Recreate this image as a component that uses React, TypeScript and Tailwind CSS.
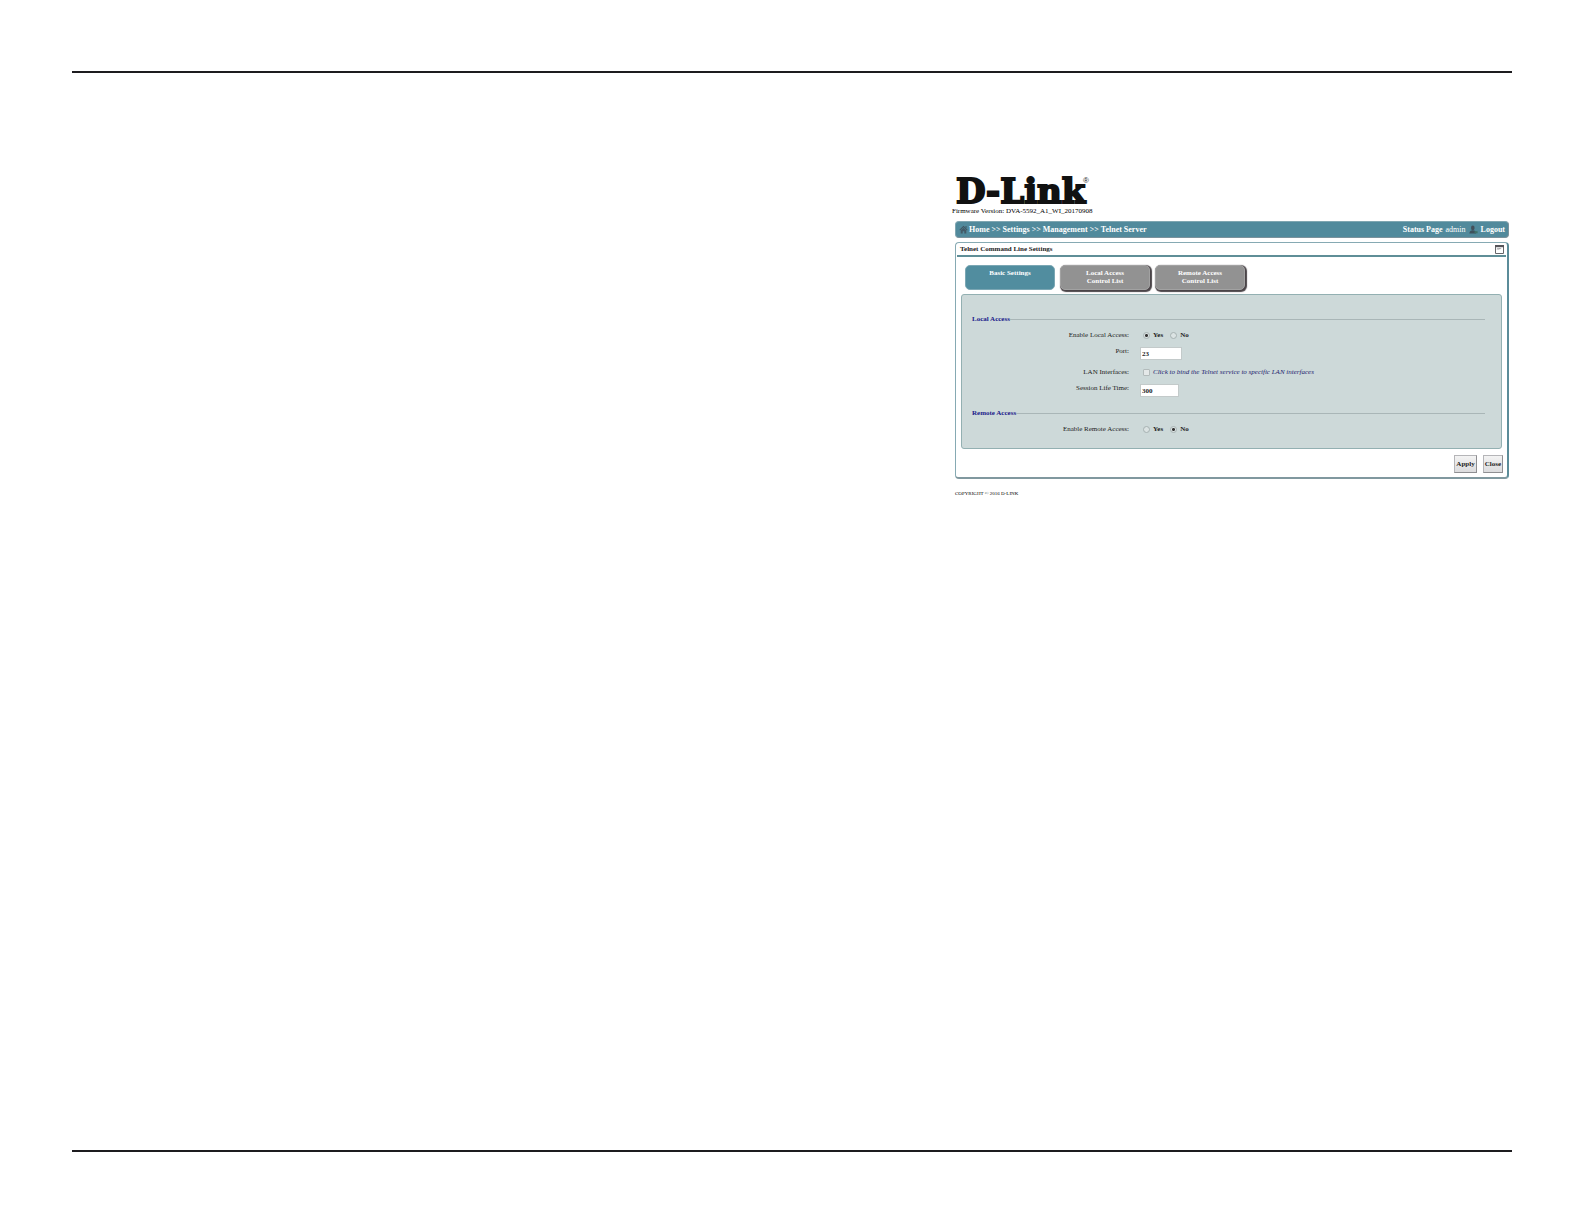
import { useState } from "react";
import type { ReactNode } from "react";
import clsx from "clsx";

const tabs = [
  { id: "basic", lines: ["Basic Settings"] },
  { id: "local", lines: ["Local Access", "Control List"] },
  { id: "remote", lines: ["Remote Access", "Control List"] },
];

export default function App() {
  return (
    <div className="min-h-screen bg-white px-[72px] pt-[71px] pb-[72px] flex flex-col font-['Liberation_Serif',serif] text-black">
      <div className="flex-1 border-y-2 border-[#1d1c1f] pt-[102px]">
        <div className="w-full max-w-[554px] ml-auto mr-[3px]">
          <Header />
          <NavBar />
          <TelnetSettings />
          <footer className="mt-3 text-[5px] leading-[6px]">COPYRIGHT © 2016 D-LINK</footer>
        </div>
      </div>
    </div>
  );
}

function Header() {
  return (
    <header className="mb-[6px]">
      <svg viewBox="0 0 140 32" className="block w-[140px] h-[32px] overflow-visible" role="img" aria-label="D-Link">
        <text
          x="1"
          y="28"
          fontFamily="DejaVu Serif, serif"
          fontWeight="700"
          fontSize="34"
          fill="#111"
          stroke="#111"
          strokeWidth="2"
        >
          D-Link
        </text>
        <text x="128" y="8" fontFamily="Liberation Sans, sans-serif" fontSize="8" fill="#222">
          ®
        </text>
      </svg>
      <p className="-ml-[3px] text-[7px] leading-[8px]">Firmware Version: DVA-5592_A1_WI_20170908</p>
    </header>
  );
}

function NavBar() {
  return (
    <nav className="flex items-center justify-between h-[17px] px-[3px] rounded-sm bg-[#518a9c] border border-[#7fa6b1] border-b-[#7b929c] border-r-[#7b929c] text-[8px] leading-[10px] font-bold text-white">
      <div className="flex items-center gap-px">
        <HomeIcon />
        <span className="flex gap-[2px]">
          <a href="#home">Home</a>
          <span>&gt;&gt;</span>
          <a href="#settings">Settings</a>
          <span>&gt;&gt;</span>
          <a href="#management">Management</a>
          <span>&gt;&gt;</span>
          <a href="#telnet">Telnet Server</a>
        </span>
      </div>
      <div className="flex items-center gap-[3px]">
        <a href="#status">Status Page</a>
        <span className="font-normal">admin</span>
        <UserIcon />
        <a href="#logout">Logout</a>
      </div>
    </nav>
  );
}

function TelnetSettings() {
  const [tab, setTab] = useState("basic");

  return (
    <main className="mt-1 px-px pb-1 rounded-sm border border-[#86aab3] border-r-2 border-b-2 border-r-[#5b8c99] border-b-[#80989f]">
      <div className="flex items-center justify-between h-[14px] pl-[3px] pr-[2px] border-b-2 border-[#5f8e97]">
        <h1 className="text-[7px] leading-[8px] font-bold text-[#222]">Telnet Command Line Settings</h1>
        <WindowIcon />
      </div>

      {/* Tabs */}
      <div className="flex gap-[5px] mt-2 ml-2">
        {tabs.map(({ id, lines }) => (
          <button
            key={id}
            type="button"
            onClick={() => setTab(id)}
            className={clsx(
              "flex flex-col items-center w-[90px] h-[25px] pt-[3px] rounded-[5px] text-[7px] leading-[8px] font-bold text-white",
              tab === id
                ? "bg-[#518d9f] border border-[#7ba7b4]"
                : "bg-[#929292] border border-[#a2a2a2] shadow-[1px_1px_1px_1px_#4a4448]"
            )}
          >
            {lines.map((line) => (
              <span key={line}>{line}</span>
            ))}
          </button>
        ))}
      </div>

      <form onSubmit={(e) => e.preventDefault()}>
        <div className="mt-1 mx-1 pt-5 pb-[15px] px-[10px] rounded-[3px] bg-[#cdd9d9] border border-[#93b0b2]">
          <SectionTitle>Local Access</SectionTitle>
          <div className="mt-2 flex flex-col gap-2">
            <YesNoRow label="Enable Local Access:" name="local" initial="Yes" />
            <Row label="Port:" htmlFor="port">
              <TextBox id="port" value="23" className="w-[42px]" />
            </Row>
            <Row label="LAN Interfaces:" htmlFor="lan">
              <input
                id="lan"
                type="checkbox"
                className="appearance-none ml-[3px] size-[7px] rounded-[1px] border border-[#b3bbbb] bg-[#e4e8e8] checked:bg-[#518a9c]"
              />
              <label htmlFor="lan" className="ml-[3px] italic text-[#23236e]">
                Click to bind the Telnet service to specific LAN interfaces
              </label>
            </Row>
            <Row label="Session Life Time:" htmlFor="life">
              <TextBox id="life" value="300" className="w-[39px]" />
            </Row>
          </div>
          <div className="mt-3">
            <SectionTitle>Remote Access</SectionTitle>
          </div>
          <div className="mt-2">
            <YesNoRow label="Enable Remote Access:" name="remote" initial="No" />
          </div>
        </div>

        <div className="flex justify-end gap-[6px] mt-[6px] mr-[3px]">
          <ActionButton>Apply</ActionButton>
          <ActionButton>Close</ActionButton>
        </div>
      </form>
    </main>
  );
}

function SectionTitle({ children }: { children: ReactNode }) {
  return (
    <div className="flex items-center mr-[6px] text-[7px] leading-[8px]">
      <h2 className="font-bold text-[#20208a]">{children}</h2>
      <span className="flex-1 h-px bg-[#a9b6b7]" />
    </div>
  );
}

function Row({ label, htmlFor, children }: { label: string; htmlFor?: string; children: ReactNode }) {
  return (
    <div className="flex items-center min-h-2 text-[7px] leading-[8px] text-[#222]">
      {htmlFor ? (
        <label htmlFor={htmlFor} className="self-start w-[157px] mr-[11px] text-right">{label}</label>
      ) : (
        <span className="self-start w-[157px] mr-[11px] text-right">{label}</span>
      )}
      {children}
    </div>
  );
}

function YesNoRow({ label, name, initial }: { label: string; name: string; initial: string }) {
  return (
    <Row label={label}>
      <div className="flex gap-[7px] ml-[3px]" role="radiogroup" aria-label={label}>
        {["Yes", "No"].map((option) => (
          <label key={option} className="flex items-center gap-[3px] font-bold">
            <input
              type="radio"
              name={name}
              defaultChecked={option === initial}
              className="appearance-none size-[7px] rounded-full border border-[#a6b1b1] bg-[#dbe3e3] checked:bg-[radial-gradient(circle,#333_0_1px,#dbe3e3_2px)]"
            />
            {option}
          </label>
        ))}
      </div>
    </Row>
  );
}

function TextBox({ id, value, className }: { id: string; value: string; className: string }) {
  return (
    <input
      id={id}
      type="text"
      defaultValue={value}
      className={clsx("h-[13px] px-px bg-white border border-[#c3caca] text-[7px] leading-[8px] font-bold", className)}
    />
  );
}

function ActionButton({ children }: { children: ReactNode }) {
  return (
    <button
      type="button"
      className="h-[18px] px-px border border-[#b5b5b8] border-r-[#8f8f92] border-b-[#8f8f92] bg-linear-to-b from-[#f3f3f3] to-[#dcdcde] text-[7px] leading-[8px] font-bold text-[#222]"
    >
      {children}
    </button>
  );
}

function HomeIcon() {
  return (
    <svg viewBox="0 0 9 9" className="size-[9px]" aria-hidden="true">
      <path d="M4.5 .8 8.6 4.7 7.9 5.4 4.5 2.3 1.1 5.4 .4 4.7Z" fill="#3f5662" />
      <path d="M4.5 2.8 7.3 5.3V8.4H5.3V6.2H3.7V8.4H1.7V5.3Z" fill="#435a67" />
      <path d="M6.5 1.1H7.5V3.4L6.5 2.5Z" fill="#3f5662" />
    </svg>
  );
}

function UserIcon() {
  return (
    <svg viewBox="0 0 9 9" className="size-[9px]" aria-hidden="true">
      <ellipse cx="3.8" cy="2.9" rx="1.8" ry="2.3" fill="#44505a" />
      <path d="M.4 8.4C.5 6.3 1.7 5.5 3.8 5.3 5.9 5.5 7 6.3 7.1 8.4Z" fill="#3d505c" />
      <path d="M5.5 6.2H8.6V8.3H5.5Z" fill="#3f7168" />
    </svg>
  );
}

function WindowIcon() {
  return (
    <svg viewBox="0 0 9 9" className="size-[9px]" aria-hidden="true">
      <path d="M.5 .5H8.5V8.5H.5Z" fill="#fff" stroke="#66666a" />
      <path d="M0 0H9V2.2H0Z" fill="#55555a" />
      <path d="M2.2 4.7V3.6H6.2M3.4 4.5 4.8 3.6" fill="none" stroke="#8b8b8e" strokeWidth=".7" />
    </svg>
  );
}
